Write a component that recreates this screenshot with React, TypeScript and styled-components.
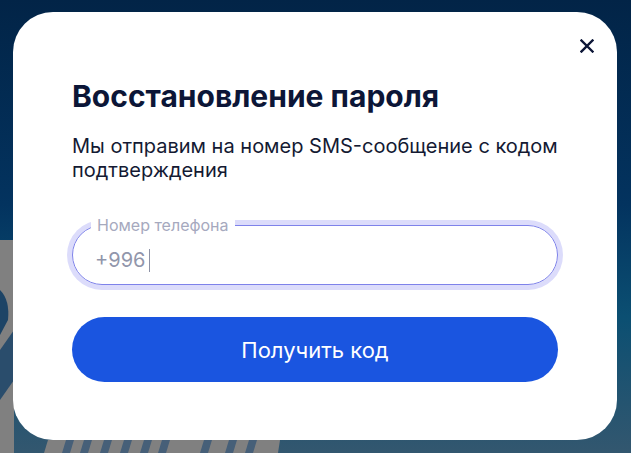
import React from "react";
import styled, { createGlobalStyle } from "styled-components";

const Global = createGlobalStyle`
  html, body { margin: 0; padding: 0; }
  body { font-family: Inter, "Noto Sans", sans-serif; }
  * { box-sizing: border-box; }
`;

const Page = styled.div`
  position: relative;
  width: 631px;
  height: 453px;
  overflow: hidden;
  background: linear-gradient(180deg, #022447 0%, #03335f 45%, #0b4f72 70%, #33576f 100%);
  padding: 12px 14px 13px 13px;
`;

const Decor = styled.svg`
  position: absolute;
  inset: 0;
  width: 631px;
  height: 453px;
`;

const Modal = styled.div`
  position: relative;
  height: 100%;
  background: #ffffff;
  border-radius: 40px;
  padding: 66px 59px 0 59px;
  display: flex;
  flex-direction: column;
`;

const Close = styled.button`
  position: absolute;
  top: 24px;
  right: 20px;
  width: 20px;
  height: 20px;
  padding: 0;
  border: 0;
  background: none;
  display: flex;
  align-items: center;
  justify-content: center;
  cursor: pointer;
`;

const Title = styled.h1`
  margin: 0;
  font-size: 30px;
  line-height: 36px;
  font-weight: 700;
  color: #0c1637;
  white-space: nowrap;
`;

const Subtitle = styled.p`
  margin: 20px 0 0;
  font-size: 20px;
  line-height: 24px;
  font-weight: 400;
  color: #141a33;
`;

const Field = styled.label`
  position: relative;
  display: flex;
  align-items: center;
  margin-top: 43px;
  height: 60px;
  border: 1px solid #7e82ea;
  border-radius: 30px;
  box-shadow: 0 0 0 5px #dcdcfb;
  padding: 10px 22px 0;
`;

const FieldLabel = styled.span`
  position: absolute;
  top: -10px;
  left: 18px;
  padding: 0 6px;
  background: #ffffff;
  font-size: 16px;
  line-height: 18px;
  color: #a6a9be;
  white-space: nowrap;
`;

const Value = styled.span`
  font-size: 20px;
  color: #9196ab;
`;

const Caret = styled.span`
  display: inline-block;
  width: 1px;
  height: 23px;
  margin-left: 4px;
  background: #8d92a6;
`;

const Submit = styled.button`
  margin-top: 32px;
  height: 65px;
  border: 0;
  border-radius: 33px;
  background: #1a55e0;
  color: #ffffff;
  font-family: Inter, "Noto Sans", sans-serif;
  font-size: 22px;
  font-weight: 400;
  cursor: pointer;
`;

export default function App() {
  return (
    <>
      <Global />
      <Page>
        <Decor viewBox="0 0 631 453">
          <rect x="0" y="240" width="14" height="213" fill="#808080" />
          <path d="M0 290 Q10 300 8 320 L0 335 Z" fill="#1d4466" />
          <path d="M0 350 L14 330 L14 380 L0 400 Z" fill="#2a4d6c" />
          <path d="M44 453 L48 440 L280 440 L278 453 Z" fill="#808080" />
          {[62, 80, 100, 120, 140, 158, 200, 225, 245].map((x) => (
            <path key={x} d={`M${x} 453 L${x + 4} 440 L${x + 12} 440 L${x + 8} 453 Z`} fill="#465f78" />
          ))}
        </Decor>
        <Modal>
          <Close aria-label="close">
            <svg width="14" height="14" viewBox="0 0 14 14">
              <path d="M1.5 1.5 L12.5 12.5 M12.5 1.5 L1.5 12.5" stroke="#0c1637" strokeWidth="2.4" strokeLinecap="square" />
            </svg>
          </Close>
          <Title>Восстановление пароля</Title>
          <Subtitle>Мы отправим на номер SMS-сообщение с кодом подтверждения</Subtitle>
          <Field>
            <FieldLabel>Номер телефона</FieldLabel>
            <Value>+996</Value>
            <Caret />
          </Field>
          <Submit>Получить код</Submit>
        </Modal>
      </Page>
    </>
  );
}
